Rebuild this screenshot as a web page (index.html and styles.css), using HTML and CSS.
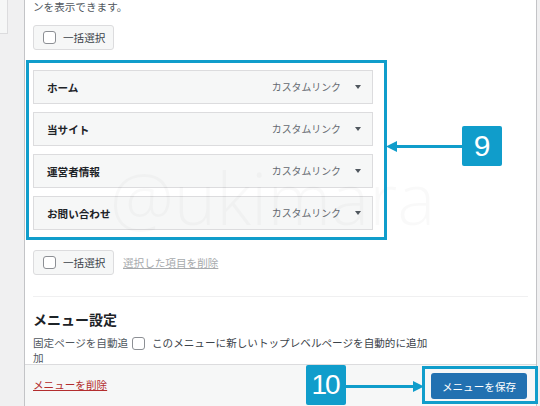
FILE: index.html
```html
<!DOCTYPE html>
<html lang="ja">
<head>
<meta charset="utf-8">
<title>メニュー構造</title>
<link rel="stylesheet" href="styles.css">
</head>
<body>
<div class="page">
  <div class="side"><div class="side-card"></div></div>
  <div class="panel">
    <div class="panel-body">
      <p class="desc">ンを表示できます。</p>
      <label class="bulk"><span class="cb"></span>一括選択</label>
      <ul class="menu-list">
        <li class="item"><span class="title">ホーム</span><span class="type">カスタムリンク</span><span class="caret"></span></li>
        <li class="item"><span class="title">当サイト</span><span class="type">カスタムリンク</span><span class="caret"></span></li>
        <li class="item"><span class="title">運営者情報</span><span class="type">カスタムリンク</span><span class="caret"></span></li>
        <li class="item"><span class="title">お問い合わせ</span><span class="type">カスタムリンク</span><span class="caret"></span></li>
      </ul>
      <div class="bulk-row">
        <label class="bulk"><span class="cb"></span>一括選択</label>
        <a class="remove-selected">選択した項目を削除</a>
      </div>
      <hr class="sep">
      <h3 class="settings-title">メニュー設定</h3>
      <div class="settings-row">
        <span class="settings-label">固定ページを自動追加</span>
        <span class="cb cb-settings"></span>
        <span class="settings-text">このメニューに新しいトップレベルページを自動的に追加</span>
      </div>
    </div>
    <div class="panel-footer">
      <a class="delete">メニューを削除</a>
      <button class="save">メニューを保存</button>
    </div>
  </div>
</div>

<div class="watermark">@ukimara</div>

<div class="hl hl-list"></div>
<svg class="arrow arrow-9" width="76" height="13" viewBox="0 0 76 13"><polygon points="0,6.5 11,1 11,12"/><rect x="10" y="5" width="66" height="3"/></svg>
<div class="badge badge-9">9</div>

<div class="badge badge-10">10</div>
<svg class="arrow arrow-10" width="78" height="13" viewBox="0 0 78 13"><rect x="0" y="5" width="68" height="3"/><polygon points="78,6.5 67,1 67,12"/></svg>
<div class="hl hl-save"></div>
</body>
</html>
```

FILE: styles.css
```css
html, body {
  margin: 0;
  padding: 0;
}
body {
  background: #f0f0f1;
  font-family: "Noto Sans CJK JP", "Noto Sans", sans-serif;
  font-size: 10.6px;
  color: #3c434a;
  width: 540px;
  height: 406px;
  overflow: hidden;
  position: relative;
}
.page {
  display: flex;
  gap: 16px;
  height: 406px;
}
.side {
  width: 8px;
  flex-shrink: 0;
}
.side-card {
  height: 34px;
  box-sizing: border-box;
  background: #f6f7f7;
  border-right: 1px solid #dcdcde;
  border-bottom: 1px solid #dcdcde;
}
.panel {
  width: 513px;
  flex-shrink: 0;
  box-sizing: border-box;
  border-left: 1px solid #c3c4c7;
  border-right: 1px solid #c3c4c7;
  background: #fff;
  display: flex;
  flex-direction: column;
}
.panel-body {
  flex: 1 1 auto;
  min-height: 0;
  padding: 0 8px;
}
.desc {
  margin: -1px 0 0;
  line-height: 16px;
  color: #50575e;
}
.bulk {
  display: flex;
  align-items: center;
  gap: 7px;
  width: 81px;
  height: 25px;
  box-sizing: border-box;
  padding-left: 9px;
  border: 1px solid #dcdcde;
  border-radius: 3px;
  background: #f6f7f7;
  color: #3c434a;
  line-height: 16px;
}
.desc + .bulk {
  margin-top: 10px;
}
.cb {
  display: block;
  width: 13px;
  height: 13px;
  box-sizing: border-box;
  border: 1px solid #8c8f94;
  border-radius: 3px;
  background: #fff;
  flex-shrink: 0;
}
.menu-list {
  list-style: none;
  margin: 20px 0 0;
  padding: 0;
  display: flex;
  flex-direction: column;
  gap: 8px;
}
.item {
  width: 340px;
  height: 34px;
  box-sizing: border-box;
  border: 1px solid #dcdcde;
  background: #f6f7f7;
  display: flex;
  align-items: center;
  padding: 0 10px 0 13px;
}
.title {
  font-weight: 700;
  color: #1d2327;
  flex: 1;
}
.type {
  font-size: 9.9px;
  color: #646970;
}
.caret {
  width: 0;
  height: 0;
  border-left: 3px solid transparent;
  border-right: 3px solid transparent;
  border-top: 4px solid #50575e;
  margin-left: 14px;
  margin-right: 1px;
}
.bulk-row {
  margin-top: 20px;
  display: flex;
  align-items: center;
}
.remove-selected {
  margin-left: 9px;
  color: #a7aaad;
  text-decoration: underline;
}
.sep {
  margin: 21px 0 0;
  border: 0;
  border-top: 1px solid #f0f0f1;
  height: 0;
}
.settings-title {
  margin: 12px 0 0;
  font-size: 14px;
  line-height: 20px;
  font-weight: 700;
  color: #1d2327;
}
.settings-row {
  margin-top: 6px;
  display: flex;
  align-items: flex-start;
  line-height: 15px;
}
.settings-label {
  width: 98px;
  flex-shrink: 0;
  color: #50575e;
}
.cb-settings {
  margin: 2px 0 0 1px;
}
.settings-text {
  margin-left: 7px;
  color: #3c434a;
}
.panel-footer {
  flex-shrink: 0;
  height: 42px;
  box-sizing: border-box;
  border-top: 1px solid #dcdcde;
  background: #f6f7f7;
  display: flex;
  align-items: center;
  justify-content: space-between;
  padding: 0 9px 0 8px;
}
.delete {
  color: #b32d2e;
  text-decoration: underline;
  margin-top: -2px;
}
.save {
  width: 96px;
  height: 26px;
  border: 0;
  border-radius: 3px;
  background: #2271b1;
  color: #fff;
  font-family: inherit;
  font-size: 10.6px;
  padding: 0;
  margin-top: 1px;
}
.watermark {
  position: absolute;
  left: 110px;
  top: 161px;
  font-family: "Open Sans", sans-serif;
  font-weight: 300;
  font-size: 72px;
  line-height: 72px;
  color: rgba(0, 0, 0, 0.022);
  pointer-events: none;
}
.hl {
  position: absolute;
  box-sizing: border-box;
  border: 3px solid #109dcb;
}
.hl-list {
  left: 26px;
  top: 60px;
  width: 361px;
  height: 180px;
}
.hl-save {
  left: 422px;
  top: 366px;
  width: 116px;
  height: 38px;
}
.arrow {
  position: absolute;
  fill: #109dcb;
}
.arrow-9 {
  left: 386px;
  top: 140px;
}
.arrow-10 {
  left: 346px;
  top: 380px;
}
.badge {
  position: absolute;
  width: 40px;
  height: 40px;
  border-radius: 2px;
  background: #109dcb;
  color: #fff;
  font-family: "Liberation Sans", Arial, sans-serif;
  font-size: 30px;
  line-height: 40px;
  text-align: center;
}
.badge-9 {
  left: 462px;
  top: 126px;
}
.badge-10 {
  left: 306px;
  top: 365px;
  font-size: 28px;
  letter-spacing: -2px;
  text-indent: -2px;
}
```
